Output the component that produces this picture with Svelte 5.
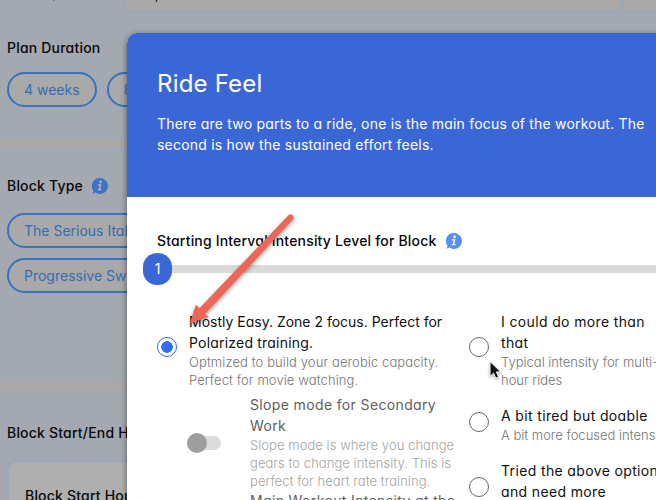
<script>
  const durations = ['4 weeks', '8 weeks'];
  const blocks = ['The Serious Italian', 'Progressive Sweet Spot'];

  const feels = [
    {
      title: ['I could do more than', 'that'],
      detail: ['Typical intensity for multi-', 'hour rides']
    },
    { title: ['A bit tired but doable'], detail: ['A bit more focused intensity'] },
    { title: ['Tried the above options', 'and need more'], detail: ['Recovery ride'] }
  ];

  let selected = $state('easy');
  let level = $state(1);
</script>

{#snippet info()}
  <svg class="info" width="16" height="16" viewBox="0 0 16 16">
    <path fill="currentColor" d="M8 0a8 8 0 1 1-4.6 14.6C2.500 15.400 1.500 15.700.4 15.600c.8-.9 1.100-1.800 1-2.900A8 8 0 0 1 8 0z" />
    <circle class="mark" cx="8.600" cy="3.900" r="1.300" />
    <path class="mark" d="M6 6.300h3.400L8.300 11h1.300l-.3 1.200H5.700L6 11h.9l.8-3.500H5.800z" />
  </svg>
{/snippet}

{#snippet lines(rows)}
  {#each rows as row}
    <span class="line">{row}</span>
  {/each}
{/snippet}

<div class="screen">
  <nav class="tabs">
    <div class="tab active"><span>Setup</span></div>
    <div class="tab"><span>Options</span></div>
    <div class="tab last"></div>
  </nav>

  <section class="panel duration">
    <h3>Plan Duration</h3>
    <div class="pills">
      {#each durations as d}
        <button class="pill">{d}</button>
      {/each}
    </div>
  </section>

  <section class="panel type">
    <h3>Block Type {@render info()}</h3>
    <div class="pills column">
      {#each blocks as b}
        <button class="pill">{b}</button>
      {/each}
    </div>
  </section>

  <section class="panel hours">
    <h3>Block Start/End Hours</h3>
    <div class="card"><h3>Block Start Hour</h3></div>
  </section>

  <div class="modal">
    <header>
      <h1>Ride Feel</h1>
      <p>
        <span class="line">There are two parts to a ride, one is the main focus of the workout. The</span>
        <span class="line">second is how the sustained effort feels.</span>
      </p>
    </header>

    <div class="body">
      <h2>Starting Interval Intensity Level for Block {@render info()}</h2>
      <div class="slider">
        <div class="thumb">{level}</div>
        <div class="track"></div>
      </div>

      <div class="choices">
        <div class="left">
          <div class="choice">
            <button class="radio" class:on={selected === 'easy'} aria-label="Mostly Easy" onclick={() => (selected = 'easy')}></button>
            <div>
              <div class="title easy">{@render lines(['Mostly Easy. Zone 2 focus. Perfect for', 'Polarized training.'])}</div>
              <div class="detail">{@render lines(['Optmized to build your aerobic capacity.', 'Perfect for movie watching.'])}</div>
            </div>
          </div>
          <div class="option">
            <div class="toggle"><i></i></div>
            <div>
              <div class="title">{@render lines(['Slope mode for Secondary', 'Work'])}</div>
              <div class="detail">{@render lines(['Slope mode is where you change', 'gears to change intensity. This is', 'perfect for heart rate training.'])}</div>
            </div>
          </div>
          <div class="option">
            <div></div>
            <div class="title">{@render lines(['Main Workout Intensity at the'])}</div>
          </div>
        </div>

        <div class="right">
          {#each feels as feel, i}
            <div class="choice">
              <button class="radio" class:on={selected === i} aria-label={feel.title[0]} onclick={() => (selected = i)}></button>
              <div>
                <div class="title">{@render lines(feel.title)}</div>
                <div class="detail">{@render lines(feel.detail)}</div>
              </div>
            </div>
          {/each}
        </div>
      </div>
    </div>
  </div>

  <svg class="arrow" width="120" height="124" viewBox="0 0 120 124">
    <path d="M107.300 5.400a3 3 0 0 1 4.400 4.200L24.100 103.700l3.400 3.300-18.500 6.300 5.800-18.600 3.700 3.500z" />
  </svg>
  <svg class="cursor" width="16" height="22" viewBox="0 0 16 22">
    <path d="M2 1.500v15l3.500-3.300 2.300 5 2.900-1.300-2.300-5h4.400z" />
  </svg>
</div>

<style>
  :global(body) { overflow: hidden; }

  .screen {
    position: relative;
    width: 656px;
    height: 500px;
    overflow: hidden;
    background: #a9a9aa;
    color: #08090b;
    font: 400 14px/21px Inter, "Open Sans", sans-serif;
    font-feature-settings: "cv11";
    white-space: nowrap;
  }

  h1, h2, h3, p { margin: 0; }
  h3 { font-size: 14px; font-weight: 500; line-height: 21px; letter-spacing: 0.2px; }
  button { font: inherit; padding: 0; background: none; }
  .line { display: block; }

  .tabs { display: flex; height: 13px; background: #a3a8b1; }
  .tab {
    box-sizing: border-box;
    height: 13px;
    border-left: 2px solid #98a9b9;
    border-bottom: 2px solid #98a9b9;
    background: #a9a9aa;
    width: 497px;
    display: flex;
    align-items: flex-end;
    padding-left: 18px;
  }
  .tab span { margin-bottom: 7px; }
  .tab.active { width: 124px; border: 0; background: none; color: #285fae; padding-left: 22px; }
  .tab.active span { margin-bottom: 10px; }
  .tab.last { width: 35px; }

  .panel { box-sizing: border-box; padding-left: 7px; background: #a3a8b1; }
  .duration { height: 125px; padding-top: 24px; border-bottom: 1px solid #97a9c6; }
  .type {
    height: 231px;
    margin-top: 11px;
    padding-top: 25px;
    border-top: 1px solid #97a9c6;
    border-bottom: 1px solid #97a9c6;
  }
  .hours { height: 120px; margin-top: 13px; padding-top: 28px; border-top: 1px solid #97a9c6; }

  .pills { display: flex; gap: 10px; margin-top: 15px; }
  .duration .pills { margin-top: 14px; }
  .pills.column { flex-direction: column; align-items: flex-start; margin-top: 17px; }
  .pill {
    box-sizing: border-box;
    height: 35px;
    padding: 0 15px;
    border: 2px solid #3a70bd;
    border-radius: 18px;
    background: #a9a9aa;
    color: #336db9;
  }
  .card {
    width: 640px;
    margin-top: 17px;
    padding: 23px 16px;
    border: 2px solid #98a9c4;
    border-radius: 10px;
    background: #afafaf;
  }

  .info { margin-left: 5px; vertical-align: -3px; color: #3f72c0; }
  .mark { fill: #b4b7bf; }

  .modal {
    position: absolute;
    left: 127px;
    top: 33px;
    width: 600px;
    height: 520px;
    border-radius: 10px;
    overflow: hidden;
    background: #fff;
    box-shadow: 0 2px 6px rgba(0, 0, 0, 0.5);
  }
  header {
    box-sizing: border-box;
    height: 164px;
    padding: 33px 0 0 30px;
    background: #3b67d6;
    color: #fff;
    letter-spacing: 0.2px;
  }
  h1 { font-size: 24px; font-weight: 400; line-height: 36px; }
  header p { margin-top: 11px; }

  .body { padding: 33px 0 0 30px; }
  .body .info { margin-left: 6px; color: #5590fa; }
  .body .mark { fill: #fff; }
  h2 { font-size: 14px; font-weight: 500; line-height: 21px; letter-spacing: 0.18px; }

  .slider { display: flex; align-items: center; height: 32px; margin: 2px 0 0 -14px; }
  .thumb {
    width: 29px;
    height: 32px;
    border-radius: 14px;
    background: #3b67d6;
    color: #fff;
    line-height: 32px;
    text-align: center;
  }
  .track { flex: 1; height: 8px; background: #dadada; }

  .choices { display: grid; grid-template-columns: 312px 260px; margin-top: 26px; }
  .choice { display: grid; grid-template-columns: 32px 1fr; align-items: center; }
  .right .choice { margin-bottom: 16px; }
  .title { line-height: 21px; color: #101010; letter-spacing: 0.36px; }
  .title.easy { letter-spacing: 0; }
  .title.easy .line + .line, .title.easy :global(.line + .line) { letter-spacing: 0.2px; }
  .detail { font-size: 13px; font-weight: 300; line-height: 18px; letter-spacing: 0.05px; color: #757575; }
  .choice .detail { letter-spacing: 0.1px; }
  .right .detail { letter-spacing: 0; }

  .radio {
    box-sizing: border-box;
    width: 20px;
    height: 20px;
    margin-bottom: 6px;
    border: 1px solid #666;
    border-radius: 50%;
  }
  .radio.on { border-color: #2f6df5; background: radial-gradient(circle, #2f6df5 5.500px, transparent 6px); }

  .option { display: grid; grid-template-columns: 93px 1fr; align-items: center; margin-top: 5px; }
  .option + .option { margin-top: 0; }
  .option .title { color: #606060; }
  .option .detail { color: #a4a4a4; }
  .toggle { width: 34px; height: 14px; margin: 2px 0 0 30px; border-radius: 7px; background: #dcdcdc; }
  .toggle i { display: block; width: 20px; height: 20px; border-radius: 50%; background: #9e9e9e; transform: translateY(-3px); }

  .arrow { position: absolute; left: 181px; top: 210px; fill: #ed6656; filter: drop-shadow(0 2px 2px rgba(0, 0, 0, 0.4)); }
  .cursor { position: absolute; left: 488px; top: 360px; fill: #111; stroke: #fff; filter: drop-shadow(0 1px 1px rgba(0, 0, 0, 0.35)); }
</style>
